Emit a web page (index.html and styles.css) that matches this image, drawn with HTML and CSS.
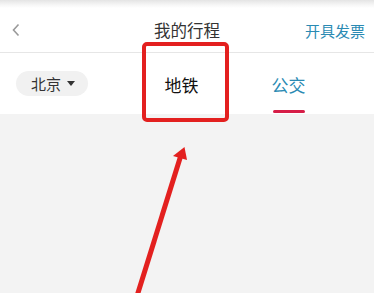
FILE: index.html
```html
<!DOCTYPE html>
<html lang="zh">
<head>
<meta charset="utf-8">
<link rel="stylesheet" href="styles.css">
</head>
<body>
<div class="page">
  <div class="shade"></div>
  <div class="header">
    <span class="back">
      <svg width="10" height="14" viewBox="0 0 10 14"><path d="M7.5 1.5 L2.5 7 L7.5 12.5" fill="none" stroke="#9a9a9a" stroke-width="1.6"/></svg>
    </span>
    <span class="title">我的行程</span>
    <span class="invoice">开具发票</span>
  </div>
  <div class="tabs">
    <div class="city">北京<span class="caret"></span></div>
    <div class="tab tab-metro">地铁</div>
    <div class="tab tab-bus active">公交</div>
  </div>
  <div class="content"></div>
  <svg class="annot" width="374" height="293" viewBox="0 0 374 293">
    <rect x="144" y="44" width="83" height="76" rx="3" fill="none" stroke="#e3201f" stroke-width="4"/>
    <line x1="137" y1="296" x2="181" y2="155" stroke="#e3201f" stroke-width="5"/>
    <polygon points="184.5,147 173,156 187,160" fill="#e3201f"/>
  </svg>
</div>
</body>
</html>
```
FILE: styles.css
```css
* { box-sizing: border-box; }
html, body { margin: 0; padding: 0; background: #fff; }
body { font-family: "Noto Sans CJK SC", "Noto Sans", sans-serif; }
.page {
  position: relative;
  width: 374px;
  height: 293px;
  overflow: hidden;
  display: flex;
  flex-direction: column;
}
.shade {
  height: 8px;
  flex: none;
  background: linear-gradient(#e4e4e4, #f6f6f6 60%, #fff);
}
.header {
  height: 45px;
  flex: none;
  display: flex;
  align-items: center;
  justify-content: space-between;
  padding: 0 9px 0 11px;
  border-bottom: 1px solid #e6e6e6;
  position: relative;
}
.back { width: 60px; display: flex; align-items: center; }
.back svg { display: block; }
.title {
  font-size: 16.5px;
  color: #333;
  line-height: 1;
  position: absolute;
  left: 0; right: 0;
  text-align: center;
  pointer-events: none;
}
.invoice {
  font-size: 15px;
  color: #2a8ab3;
  line-height: 1;
}
.tabs {
  height: 61px;
  flex: none;
  display: flex;
  align-items: center;
  padding-left: 16px;
}
.city {
  width: 72px;
  height: 25px;
  border-radius: 13px;
  background: #f1f1f1;
  display: flex;
  align-items: center;
  padding-left: 15px;
  font-size: 15px;
  color: #333;
  line-height: 1;
}
.caret {
  margin-left: 6px;
  width: 0; height: 0;
  border-left: 4px solid transparent;
  border-right: 4px solid transparent;
  border-top: 5px solid #333;
}
.tab {
  width: 107px;
  height: 61px;
  display: flex;
  align-items: center;
  justify-content: center;
  font-size: 17px;
  line-height: 1;
  position: relative;
  padding-top: 1px;
}
.tab-metro { margin-left: 40px; color: #111; }
.tab-bus { color: #2a8ab3; }
.tab.active::after {
  content: "";
  position: absolute;
  bottom: 1px;
  left: 50%;
  width: 32px;
  margin-left: -16px;
  height: 3px;
  border-radius: 2px;
  background: #d61d47;
}
.content {
  flex: 1;
  background: #f3f3f3;
}
.annot {
  position: absolute;
  left: 0; top: 0;
}
```
